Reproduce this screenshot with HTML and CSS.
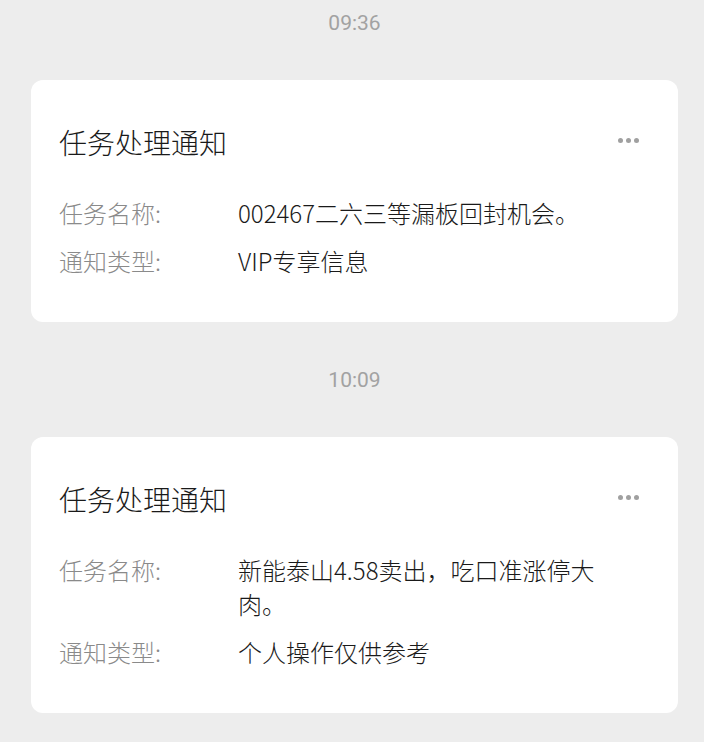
FILE: index.html
```html
<!DOCTYPE html>
<html lang="zh-CN">
<head>
<meta charset="utf-8">
<title>任务处理通知</title>
<link rel="stylesheet" href="styles.css">
</head>
<body>
<main class="feed">
  <section class="msg">
    <div class="time">09:36</div>
    <article class="card">
      <header class="card-head">
        <h2 class="card-title">任务处理通知</h2>
        <span class="more" aria-label="更多"><i></i><i></i><i></i></span>
      </header>
      <div class="row">
        <span class="label">任务名称:</span>
        <span class="value">002467二六三等漏板回封机会。</span>
      </div>
      <div class="row">
        <span class="label">通知类型:</span>
        <span class="value">VIP专享信息</span>
      </div>
    </article>
  </section>
  <section class="msg">
    <div class="time">10:09</div>
    <article class="card">
      <header class="card-head">
        <h2 class="card-title">任务处理通知</h2>
        <span class="more" aria-label="更多"><i></i><i></i><i></i></span>
      </header>
      <div class="row">
        <span class="label">任务名称:</span>
        <span class="value">新能泰山4.58卖出，吃口准涨停大肉。</span>
      </div>
      <div class="row">
        <span class="label">通知类型:</span>
        <span class="value">个人操作仅供参考</span>
      </div>
    </article>
  </section>
</main>
</body>
</html>
```

FILE: styles.css
```css
* { box-sizing: border-box; }

html, body {
  margin: 0;
  padding: 0;
  background: #ededed;
}

body {
  font-family: "Noto Sans CJK SC", "Noto Sans", sans-serif;
  color: #1a1a1a;
}

.feed {
  display: flex;
  flex-direction: column;
  padding: 8px 26px 0 31px;
}

.msg {
  display: flex;
  flex-direction: column;
}

.msg + .msg .time {
  margin-top: 43px;
}

.time {
  height: 30px;
  line-height: 30px;
  text-align: center;
  font-family: "Roboto", "Noto Sans CJK SC", sans-serif;
  font-size: 21px;
  color: #a2a2a2;
  margin-bottom: 42px;
}

.card {
  background: #ffffff;
  border-radius: 12px;
  padding: 44px 39px 44px 28px;
  display: flex;
  flex-direction: column;
}

.card-head {
  display: flex;
  align-items: center;
  justify-content: space-between;
  height: 36px;
  margin-bottom: 36px;
}

.card-title {
  margin: 0;
  font-size: 28px;
  font-weight: 300;
  line-height: 36px;
  color: #1a1a1a;
}

.more {
  display: flex;
  gap: 3px;
  margin-top: -4px;
}

.more i {
  display: block;
  width: 5px;
  height: 5px;
  border-radius: 50%;
  background: #a0a0a0;
}

.row {
  display: flex;
  align-items: flex-start;
  font-size: 24px;
  font-weight: 300;
  line-height: 34px;
}

.row + .row {
  margin-top: 14px;
}

.label {
  flex: 0 0 179px;
  color: #8a8a8a;
}

.value {
  flex: 0 1 375px;
  color: #1a1a1a;
}
```
